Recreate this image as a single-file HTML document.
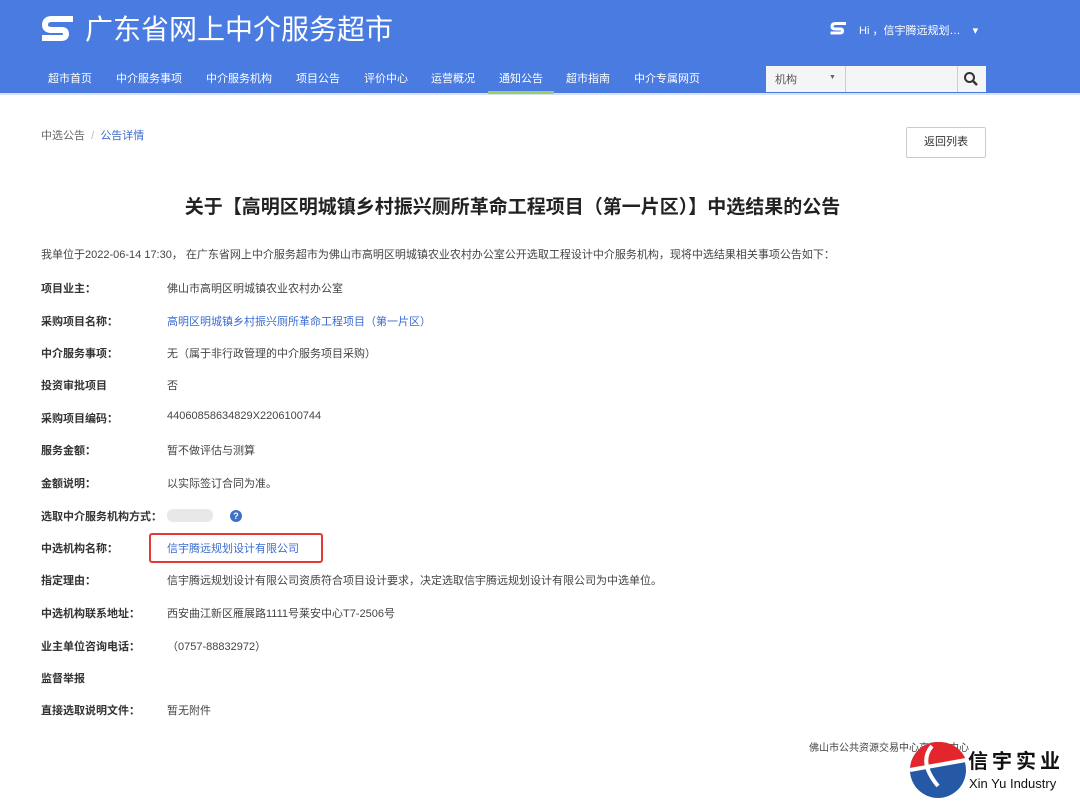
<!DOCTYPE html>
<html><head><meta charset="utf-8"><style>
*{margin:0;padding:0;box-sizing:border-box}
body{width:1080px;height:810px;background:#fff;font-family:"Liberation Sans","Noto Sans CJK SC",sans-serif;color:#333;position:relative;overflow:hidden;font-size:11px}
.hdr{position:absolute;left:0;top:0;width:1080px;height:95px;background:#4a7be1;border-bottom:2px solid #d8e2f5}
.logo{position:absolute;left:85px;top:13px;color:#fff;font-size:28px;line-height:34px}
.nav{position:absolute;top:70px;left:0;color:#fff;font-size:11px}
.nav span{position:absolute;white-space:nowrap}
.abs{position:absolute;white-space:nowrap}
.lbl{position:absolute;left:41px;font-weight:bold;color:#333;font-size:11px}
.val{position:absolute;left:167px;font-size:11px;color:#444}
.blue{color:#3b6ccf}
</style></head><body>
<div class="hdr">
  <svg class="abs" style="left:40px;top:16px" width="36" height="28" viewBox="0 0 36 28"><path d="M33 3H12Q5 3 5 9Q5 14 12 14H22Q26 14 26 18Q26 22 21 22H2" fill="none" stroke="#fff" stroke-width="6" stroke-linejoin="round"/></svg>
  <div class="logo">广东省网上中介服务超市</div>
  <svg class="abs" style="left:829px;top:22px" width="19" height="14" viewBox="0 0 36 28"><path d="M33 3H12Q5 3 5 9Q5 14 12 14H22Q26 14 26 18Q26 22 21 22H2" fill="none" stroke="#fff" stroke-width="6"/></svg>
  <div class="abs" style="left:859px;top:22px;color:#fff;font-size:11px">Hi ，信宇腾远规划…&nbsp;&nbsp;&nbsp; ▾</div>
  <div class="nav">
    <span style="left:48px">超市首页</span><span style="left:116px">中介服务事项</span><span style="left:206px">中介服务机构</span><span style="left:296px">项目公告</span><span style="left:364px">评价中心</span><span style="left:431px">运营概况</span><span style="left:499px">通知公告</span><span style="left:566px">超市指南</span><span style="left:634px">中介专属网页</span>
  </div>
  <div class="abs" style="left:488px;top:91px;width:66px;height:3px;background:#9ccc65"></div>
  <div class="abs" style="left:766px;top:66px;width:220px;height:26px;background:#f4f5f7"></div>
  <div class="abs" style="left:775px;top:71px;color:#555;font-size:11px">机构</div>
  <div class="abs" style="left:829px;top:74px;color:#666;font-size:7px">▼</div>
  <div class="abs" style="left:845px;top:66px;width:1px;height:26px;background:#ccc"></div>
  <div class="abs" style="left:957px;top:66px;width:1px;height:26px;background:#ccc"></div>
  <svg class="abs" style="left:963px;top:71px" width="16" height="16" viewBox="0 0 16 16"><circle cx="6.5" cy="6.5" r="4.5" fill="none" stroke="#333" stroke-width="2"/><path d="M10 10l4 4" stroke="#333" stroke-width="2.4"/></svg>
</div>
<div class="abs" style="left:41px;top:127px;color:#666">中选公告 &nbsp;<span style="color:#bbb">/</span>&nbsp; <span class="blue">公告详情</span></div>
<div class="abs" style="left:906px;top:127px;width:80px;height:31px;border:1px solid #ccc;border-radius:2px;text-align:center;line-height:29px;color:#333">返回列表</div>
<div class="abs" style="left:0;width:1025px;top:192px;text-align:center;font-size:19px;font-weight:bold;color:#222">关于【高明区明城镇乡村振兴厕所革命工程项目（第一片区）】中选结果的公告</div>
<div class="abs" style="left:41px;top:246px;color:#444">我单位于2022-06-14 17:30， 在广东省网上中介服务超市为佛山市高明区明城镇农业农村办公室公开选取工程设计中介服务机构，现将中选结果相关事项公告如下：</div>
<div class="lbl" style="top:280px">项目业主：</div><div class="val" style="top:280px">佛山市高明区明城镇农业农村办公室</div>
<div class="lbl" style="top:313px">采购项目名称：</div><div class="val blue" style="top:313px">高明区明城镇乡村振兴厕所革命工程项目（第一片区）</div>
<div class="lbl" style="top:345px">中介服务事项：</div><div class="val" style="top:345px">无（属于非行政管理的中介服务项目采购）</div>
<div class="lbl" style="top:377px">投资审批项目</div><div class="val" style="top:377px">否</div>
<div class="lbl" style="top:410px">采购项目编码：</div><div class="val" style="top:410px">44060858634829X2206100744</div>
<div class="lbl" style="top:442px">服务金额：</div><div class="val" style="top:442px">暂不做评估与测算</div>
<div class="lbl" style="top:475px">金额说明：</div><div class="val" style="top:475px">以实际签订合同为准。</div>
<div class="lbl" style="top:508px">选取中介服务机构方式：</div>
<div class="abs" style="left:167px;top:509px;width:46px;height:13px;background:#e8e8e8;border-radius:6px"></div>
<div class="abs" style="left:230px;top:510px;width:12px;height:12px;border-radius:50%;background:#3d72c9;color:#fff;font-size:9px;text-align:center;line-height:12px;font-weight:bold">?</div>
<div class="lbl" style="top:540px">中选机构名称：</div>
<div class="abs" style="left:149px;top:533px;width:174px;height:30px;border:2px solid #e53935;border-radius:3px"></div>
<div class="val blue" style="top:540px">信宇腾远规划设计有限公司</div>
<div class="lbl" style="top:572px">指定理由：</div><div class="val" style="top:572px">信宇腾远规划设计有限公司资质符合项目设计要求，决定选取信宇腾远规划设计有限公司为中选单位。</div>
<div class="lbl" style="top:605px">中选机构联系地址：</div><div class="val" style="top:605px">西安曲江新区雁展路1111号莱安中心T7-2506号</div>
<div class="lbl" style="top:638px">业主单位咨询电话：</div><div class="val" style="top:638px">（0757-88832972）</div>
<div class="lbl" style="top:670px">监督举报</div>
<div class="lbl" style="top:702px">直接选取说明文件：</div><div class="val" style="top:702px">暂无附件</div>
<div class="abs" style="left:809px;top:739px;font-size:10px;color:#444">佛山市公共资源交易中心高明分中心</div>
<svg class="abs" style="left:908px;top:740px" width="60" height="60" viewBox="0 0 60 60"><circle cx="30" cy="30" r="28" fill="#2559a6"/><path d="M30 2A28 28 0 0 0 2 30L58 20A28 28 0 0 0 30 2Z" fill="#e3262b"/><path d="M2 30L58 20" stroke="#fff" stroke-width="4"/><path d="M24 6Q10 22 30 46" stroke="#fff" stroke-width="4" fill="none"/></svg>
<div class="abs" style="left:968px;top:745px;font-size:20px;font-weight:bold;color:#111;letter-spacing:4px">信宇实业</div>
<div class="abs" style="left:969px;top:776px;font-size:13px;color:#111">Xin Yu Industry</div>
</body></html>
